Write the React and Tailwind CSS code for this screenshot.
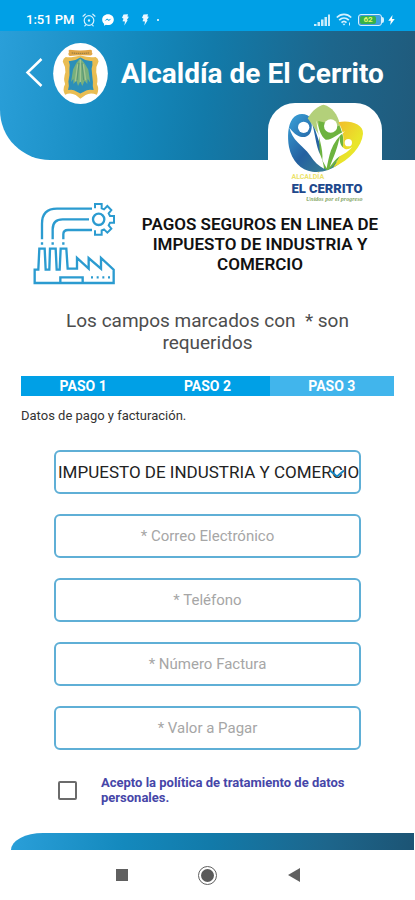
import React from "react";

function AlarmIcon() {
  return (
    <svg viewBox="0 0 14 14" className="h-[14px] w-[14px]" fill="none" stroke="#d5f1ff" strokeWidth="1.2" strokeLinecap="round">
      <circle cx="7" cy="7.5" r="4.8" />
      <path d="M1 3.2 3.2 1.2M13 3.2 10.8 1.2M2.8 12.8l1-1M11.2 12.8l-1-1" />
      <circle cx="7" cy="7.5" r="0.6" fill="#d5f1ff" />
    </svg>
  );
}

function MessengerIcon() {
  return (
    <svg viewBox="0 0 12 12" className="h-3 w-3">
      <path d="M6 .3C2.700.3.200 2.600.200 5.700c0 1.700.7 3.100 1.900 4.100v1.900l1.800-1c.7.2 1.400.3 2.100.3 3.300 0 5.800-2.300 5.800-5.300S9.300.3 6 .3z" fill="#fff" />
      <path d="M2.500 7.100 5.100 4.400 6.700 5.800 9.500 4.400 6.900 7.100 5.300 5.700z" fill="#00a0e6" />
    </svg>
  );
}

function FlashIcon() {
  return (
    <svg viewBox="0 0 10 12" className="h-3 w-[10px]" fill="#e8f7ff">
      <path d="M3.500.5 8 .2 7.400 2.500 8.800 2.700 7.800 4.800 7 5 7.500 6.500 4.300 11.600 5 7.500 2.500 7.300 3.500 4.800 2 3.800z" />
    </svg>
  );
}

function StatusBar() {
  return (
    <div className="flex h-[31px] items-center bg-[#00a0e6] pt-2 pr-5 pl-[26px] text-white">
      <span className="text-[13px] leading-4 font-medium">1:51 PM</span>
      <div className="ml-[7px] flex items-center gap-[6px]">
        <AlarmIcon />
        <MessengerIcon />
        <FlashIcon />
        <span className="ml-1 flex"><FlashIcon /></span>
        <span className="ml-px h-[2px] w-[2px] rounded-full bg-white" />
      </div>
      <div className="ml-auto flex items-center gap-[6px]">
        <svg viewBox="0 0 16 12" className="h-3 w-4" fill="#c9ecfb">
          <path d="M0 10h2.500v2H0zM3.500 8h2.500v4h-2.500zM7 5.500h2.500V12H7zM10.500 3h2.500v9h-2.500zM14 .5h2V12h-2z" />
        </svg>
        <svg viewBox="0 0 16 13" className="h-[13px] w-4" fill="none" stroke="#d5f1ff" strokeWidth="1.700">
          <path d="M.8 4.500C5 .3 11 .3 15.200 4.500M3.200 7.200c2.800-2.800 6.800-2.800 9.600 0M5.500 9.600c1.500-1.500 3.500-1.500 5 0" />
          <path d="M6.500 10.800 8 12.500 9.500 10.800z" fill="#d5f1ff" stroke="none" />
          <path d="M13.500 9.500v3" strokeWidth="1" />
        </svg>
        <div className="flex items-center">
          <div className="flex h-3 w-6 items-center rounded-[3px] border border-[#d5f1ff] bg-[#3c9fe0] p-px">
            <span className="flex h-2 w-4 items-center justify-center rounded-[2px] bg-[#35b24a] text-[8px] leading-none font-bold text-[#e6f76b]">
              62
            </span>
          </div>
          <span className="h-[6px] w-[2px] rounded-r bg-[#d5f1ff]" />
        </div>
        <svg viewBox="0 0 7 10" className="-ml-[2px] h-[10px] w-[7px]" fill="#fff">
          <path d="M4.500 0 .3 5.800h2.500L2.200 10 6.700 4H4z" />
        </svg>
      </div>
    </div>
  );
}

function Seal() {
  return (
    <svg viewBox="0 0 165 184" className="h-[61px] w-[55px] shrink-0">
      <ellipse cx="82.500" cy="92" rx="82.500" ry="92" fill="#fff" />
      <path
        d="M38 42Q50 46 82 38Q114 46 128 42Q136 46 137 56Q128 72 130 88Q136 112 132 124Q140 140 132 156Q112 148 98 157L82 168L68 157Q52 148 36 156Q27 142 36 124Q30 108 37 88Q38 72 29 56Q30 46 38 42Z"
        fill="#e9bd52"
      />
      <path
        d="M47 54Q64 56 82 44Q100 56 118 54Q120 66 116 78Q118 102 120 118Q118 132 122 142Q104 138 94 146L82 152L70 146Q60 138 45 142Q49 128 46 116Q51 98 49 78Q52 66 47 54Z"
        fill="#2b8fb9"
      />
      <path d="M82 46 94 60 106 80 112 120 104 108 103 124 95 114 88 130 82 116 75 130 70 114 61 124 61 108 54 118 60 80 70 60Z" fill="#79b07c" />
      <path d="M82 50V118M74 64 67 116M91 64 98 112" stroke="#a3c592" strokeWidth="4" fill="none" />
      <path d="M78 60 72 112M87 60 92 112" stroke="#4b8574" strokeWidth="2" fill="none" />
      <path d="M48 27Q44 22 50 20Q82 25 113 20Q120 23 116 27Q122 33 114 38Q82 35 50 39Q43 35 48 27Z" fill="#e0a646" />
      <path d="M56 30Q82 33 108 30" stroke="#9c8145" strokeWidth="4" strokeDasharray="4 2" fill="none" />
    </svg>
  );
}

function CityLogo() {
  return (
    <div className="absolute top-[72px] right-[33px] flex h-[102px] w-[114px] flex-col items-center rounded-t-[27px] bg-white">
      <svg viewBox="0 0 240 210" className="h-[70px] w-20 shrink-0">
        <defs>
          <linearGradient id="petalBlue" x1="0" y1="0" x2="1" y2="1">
            <stop offset="0" stopColor="#3aa3da" />
            <stop offset="0.5" stopColor="#2460a0" />
            <stop offset="1" stopColor="#3f8a8e" />
          </linearGradient>
          <linearGradient id="petalYellow" x1="0" y1="0" x2="1" y2="1">
            <stop offset="0" stopColor="#f3b52c" />
            <stop offset="0.6" stopColor="#e9e52a" />
          </linearGradient>
        </defs>
        <path d="M22 48C36 28 66 28 80 48L120 170L165 180C140 202 110 209 82 206C48 202 20 174 12 132C7 102 8 68 22 48Z" fill="url(#petalBlue)" />
        <path d="M68 46C82 22 100 8 116 5C142 12 158 34 164 62L172 100L112 110Z" fill="#b3d07a" />
        <path d="M100 54L164 70C184 112 180 165 128 202L106 190Z" fill="#6db33f" />
        <path d="M160 58C190 50 236 62 234 92C230 132 196 168 144 194C178 150 186 98 160 58Z" fill="url(#petalYellow)" />
        <path d="M13 74C30 96 46 104 60 102C76 98 82 82 80 60C90 84 92 128 106 156C112 170 116 184 117 197C100 188 88 176 76 158C62 140 52 132 38 118C26 106 18 92 13 74Z" fill="#fff" />
        <path d="M94 52C104 84 108 100 122 110C142 112 154 94 180 85C160 100 146 120 138 142C132 160 128 180 125 196L112 172C116 138 98 100 94 52Z" fill="#fff" />
        <path d="M165 96C162 118 168 132 180 138C190 140 196 136 202 132C192 144 176 154 164 160C152 168 142 182 134 192C146 162 160 130 165 96Z" fill="#fff" />
        <circle cx="56" cy="73" r="17" fill="#fff" />
        <circle cx="137" cy="69" r="20" fill="#fff" />
        <circle cx="190" cy="119" r="11" fill="#fff" />
      </svg>
      <div className="flex shrink-0 flex-col pl-1 text-left">
        <span className="text-[7px] leading-[8px] font-bold text-[#ece36a]">ALCALDÍA</span>
        <span className="text-[13px] leading-[15px] font-black text-[#20488c]">EL CERRITO</span>
        <span className="self-end font-['Liberation_Serif',serif] text-[6px] leading-[7px] font-bold text-[#87a86a] italic">Unidos por el progreso</span>
      </div>
    </div>
  );
}

function Header() {
  return (
    <header className="relative h-[129px] rounded-bl-[50px] bg-[linear-gradient(98deg,#2a9fd9_0%,#1489bd_32%,#127aa9_50%,#1d668c_77%,#205a7b_100%)] pt-3 pl-6">
      <div className="flex items-center">
        <button type="button" aria-label="Volver" className="mr-2 flex h-8 w-[21px] shrink-0 items-center">
          <svg viewBox="0 0 20 32" className="h-8 w-5" fill="none" stroke="#fff" strokeWidth="2.500">
            <path d="M17.500 1 3.500 14.500 17.500 28" />
          </svg>
        </button>
        <Seal />
        <h1 className="ml-[13px] text-[28px] leading-8 font-bold whitespace-nowrap text-white">Alcaldía de El Cerrito</h1>
      </div>
      <CityLogo />
    </header>
  );
}

function FactoryIcon() {
  return (
    <svg viewBox="0 0 255 249" className="h-[83px] w-[85px] shrink-0" fill="none" stroke="#2b9bd0" strokeWidth="7">
      <path d="M30 112V65Q30 20 75 20H180M62 112V82Q62 52 92 52H171M94 112V97Q94 84 108 84H180" />
      <path d="M30 121v7M62 121v7M94 121v7" />
      <path d="M8 243V203H19L22 140H38L41 203H52L54 140H71L74 203H83L86 140H103L107 200H135V168L170 200V168L207 200V168L245 203V243Z" />
      <path d="M85 243V226H152V243" />
      <path d="M177 226H235" strokeDasharray="6 11" />
      <circle cx="200" cy="52" r="17" />
      <path d="M189 19V6H209V19L216 22L226 12L238 24L230 34L234 42H246V62H234L230 70L238 80L226 92L216 82L209 85V98H189V85" strokeWidth="6" />
    </svg>
  );
}

const fields = [
  { id: "correo", label: "Correo Electrónico", type: "email" },
  { id: "telefono", label: "Teléfono", type: "tel" },
  { id: "factura", label: "Número Factura", type: "text" },
  { id: "valor", label: "Valor a Pagar", type: "text" },
];

function PaymentForm() {
  return (
    <form className="mx-[54px] mt-[26px]">
      <div className="flex flex-col gap-5">
        <div className="relative">
          <select
            aria-label="Impuesto"
            className="block h-11 w-full appearance-none rounded-md border-2 border-[#5fafd6] bg-white pt-[2px] pl-[2px] text-[17px] text-[#222]"
          >
            <option>IMPUESTO DE INDUSTRIA Y COMERCIO</option>
          </select>
          <svg viewBox="0 0 16 10" className="pointer-events-none absolute top-[19px] right-4 h-[10px] w-4" fill="none" stroke="#1787c2" strokeWidth="2">
            <path d="M1 1.500 8 7.500 15 1.500" />
          </svg>
        </div>
        {fields.map((field) => (
          <input
            key={field.id}
            id={field.id}
            type={field.type}
            aria-label={field.label}
            placeholder={"* " + field.label}
            className="block h-11 w-full rounded-md border-2 border-[#5fafd6] bg-white text-center text-[15px] text-[#222] placeholder:text-[#a6a6a6]"
          />
        ))}
      </div>
      <div className="mt-[25px] flex items-center pl-1">
        <input
          id="acepto"
          type="checkbox"
          className="h-[19px] w-[19px] shrink-0 appearance-none rounded-[2px] border-2 border-[#6b6b6b] bg-white checked:bg-[#00a0e6]"
        />
        <label htmlFor="acepto" className="ml-6 text-[13px] leading-[15px] font-bold text-[#4646a8]">
          Acepto la política de tratamiento de datos personales.
        </label>
      </div>
    </form>
  );
}

function NavBar() {
  return (
    <nav className="flex h-[50px] items-center justify-center gap-[67px]">
      <button type="button" aria-label="Recientes" className="flex w-[19px] justify-center">
        <span className="h-3 w-3 bg-[#606060]" />
      </button>
      <button type="button" aria-label="Inicio" className="flex h-[19px] w-[19px] items-center justify-center rounded-full border border-[#606060]">
        <span className="h-[13px] w-[13px] rounded-full bg-[#5a5a5a]" />
      </button>
      <button type="button" aria-label="Atrás" className="flex w-[19px] justify-center">
        <svg viewBox="0 0 12 14" className="h-[14px] w-3" fill="#606060">
          <path d="M12 0V14L0 7Z" />
        </svg>
      </button>
    </nav>
  );
}

export default function App() {
  return (
    <div className="flex min-h-screen flex-col bg-white font-[Roboto,sans-serif]">
      <StatusBar />
      <Header />
      <main>
        <section className="mt-[42px] flex items-center pr-[35px] pl-8">
          <FactoryIcon />
          <h2 className="ml-[23px] flex-1 text-center text-[17px] leading-5 font-semibold text-[#111]">
            PAGOS SEGUROS EN LINEA DE IMPUESTO DE INDUSTRIA Y COMERCIO
          </h2>
        </section>
        <p className="mx-12 mt-[25px] text-center text-[19px] leading-[22px] whitespace-pre-wrap text-[#4d4d4d]">
          {"Los campos marcados con  * son requeridos"}
        </p>
        <ol className="mx-[21px] mt-[22px] grid grid-cols-3 text-center text-[14px] leading-5 font-bold text-white">
          <li className="bg-[#00a0e6]">PASO 1</li>
          <li className="bg-[#00a0e6]">PASO 2</li>
          <li className="bg-[#41b5ec]">PASO 3</li>
        </ol>
        <p className="mt-3 ml-[21px] text-[13px] leading-4 text-[#333]">Datos de pago y facturación.</p>
        <PaymentForm />
      </main>
      <footer className="mt-auto">
        <div className="mr-px ml-[11px] h-[17px] rounded-tl-[32px_17px] bg-[linear-gradient(98deg,#2a9fd9_0%,#1489bd_28%,#127aa9_50%,#1d668c_78%,#1c5474_100%)]" />
        <NavBar />
      </footer>
    </div>
  );
}
